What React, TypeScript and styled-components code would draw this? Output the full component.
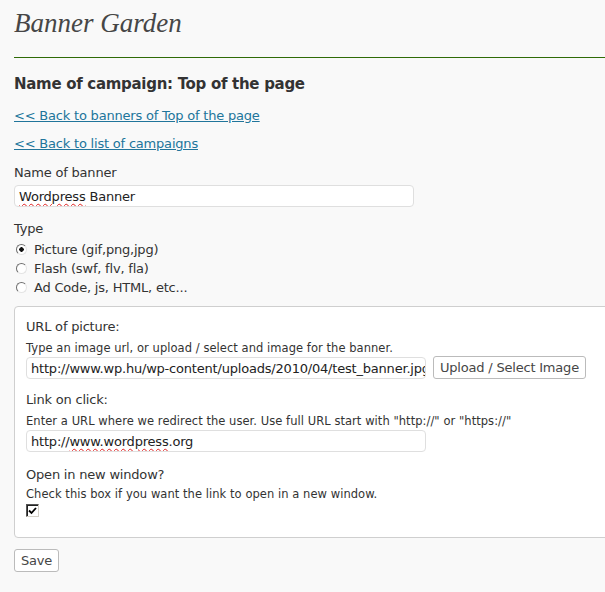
import { createGlobalStyle } from 'styled-components';
import styled from 'styled-components';

const GlobalStyle = createGlobalStyle`
  html, body {
    margin: 0;
    padding: 0;
    background: #f9f9f9;
    overflow: hidden;
  }
  body {
    font-family: "DejaVu Sans", Verdana, sans-serif;
    font-size: 13px;
    letter-spacing: -0.2px;
    color: #333;
  }
`;

const Page = styled.div`
  padding-left: 14px;
`;

const Title = styled.h1`
  margin: 0;
  padding: 7px 0 18px;
  font-family: "Liberation Serif", Georgia, serif;
  font-style: italic;
  font-weight: normal;
  font-size: 27px;
  line-height: 32px;
  letter-spacing: 0;
  color: #464646;
  border-bottom: 1px solid #2f6b07;
`;

const Heading = styled.h2`
  margin: 17px 0 0;
  font-size: 15px;
  line-height: 18px;
  font-weight: bold;
  letter-spacing: -0.3px;
  color: #333;
`;

const BackLink = styled.a<{ $gap: number }>`
  display: block;
  width: max-content;
  margin-top: ${(p) => p.$gap}px;
  line-height: 16px;
  color: #21759b;
  text-decoration: underline;
`;

const Label = styled.div<{ $gap: number }>`
  margin-top: ${(p) => p.$gap}px;
  line-height: 16px;
  color: #333;
`;

const Hint = styled.div<{ $gap: number }>`
  margin-top: ${(p) => p.$gap}px;
  font-size: 11.5px;
  line-height: 14px;
  letter-spacing: 0.05px;
  color: #333;
`;

const Field = styled.div<{ $gap?: number }>`
  box-sizing: border-box;
  width: 400px;
  height: 22px;
  margin-top: ${(p) => p.$gap ?? 0}px;
  padding: 0 4px;
  background: #fff;
  border: 1px solid #dfdfdf;
  border-radius: 4px;
  line-height: 21px;
  white-space: nowrap;
  overflow: hidden;
  color: #222;
`;

const Misspelled = styled.span`
  text-decoration: underline wavy #e02020;
  text-decoration-thickness: 1px;
  text-underline-offset: 2px;
`;

const RadioList = styled.div`
  margin-top: 3px;
  display: flex;
  flex-direction: column;
`;

const RadioRow = styled.label`
  display: flex;
  align-items: center;
  height: 19px;
  gap: 7px;
  padding-left: 2px;
`;

const Radio = styled.input.attrs({ type: 'radio' })`
  appearance: none;
  margin: 0;
  box-sizing: border-box;
  width: 11px;
  height: 11px;
  border-radius: 50%;
  border: 1px solid;
  border-color: #6f6f6f #e4e4e4 #e4e4e4 #6f6f6f;
  background: #fff;
  &:checked {
    background: radial-gradient(circle, #111 0 2px, #fff 2.5px);
  }
`;

const Panel = styled.div`
  box-sizing: border-box;
  width: 640px;
  margin-top: 9px;
  padding: 12px 11px 20px;
  background: #fff;
  border: 1px solid #cfcfcf;
  border-radius: 4px;
`;

const FieldRow = styled.div`
  display: flex;
  align-items: center;
  gap: 7px;
  margin-top: 1px;
`;

const Button = styled.button<{ $gap?: number }>`
  box-sizing: border-box;
  height: 23px;
  margin: ${(p) => p.$gap ?? 0}px 0 0;
  padding: 0 6px;
  font-family: "DejaVu Sans", Verdana, sans-serif;
  font-size: 13px;
  letter-spacing: -0.2px;
  color: #464646;
  background: #fff;
  border: 1px solid #bbb;
  border-radius: 3px;
  line-height: 21px;
`;

const CheckBox = styled.span`
  display: flex;
  align-items: center;
  justify-content: center;
  box-sizing: border-box;
  width: 13px;
  height: 13px;
  margin-top: 3px;
  border: 1px solid;
  border-color: #555 #d4d0c8 #d4d0c8 #555;
  background: #fff;
  box-shadow: inset 1px 1px 0 #222;
`;

export default function App() {
  return (
    <>
      <GlobalStyle />
      <Page>
        <Title>Banner Garden</Title>
        <Heading>Name of campaign: Top of the page</Heading>
        <BackLink $gap={15} href="#">&lt;&lt; Back to banners of Top of the page</BackLink>
        <BackLink $gap={12} href="#">&lt;&lt; Back to list of campaigns</BackLink>

        <Label $gap={13}>Name of banner</Label>
        <Field $gap={4}>
          <Misspelled>Wordpress</Misspelled> Banner
        </Field>

        <Label $gap={14}>Type</Label>
        <RadioList>
          <RadioRow>
            <Radio name="type" defaultChecked />
            Picture (gif,png,jpg)
          </RadioRow>
          <RadioRow>
            <Radio name="type" />
            Flash (swf, flv, fla)
          </RadioRow>
          <RadioRow>
            <Radio name="type" />
            Ad Code, js, HTML, etc...
          </RadioRow>
        </RadioList>

        <Panel>
          <Label $gap={0}>URL of picture:</Label>
          <Hint $gap={6}>Type an image url, or upload / select and image for the banner.</Hint>
          <FieldRow>
            <Field>http://www.wp.hu/wp-content/uploads/2010/04/test_banner.jpg</Field>
            <Button>Upload / Select Image</Button>
          </FieldRow>

          <Label $gap={13}>Link on click:</Label>
          <Hint $gap={6}>
            Enter a URL where we redirect the user. Use full URL start with "http://" or "https://"
          </Hint>
          <Field $gap={2}>
            http://<Misspelled>www.wordpress</Misspelled>.org
          </Field>

          <Label $gap={15}>Open in new window?</Label>
          <Hint $gap={4}>Check this box if you want the link to open in a new window.</Hint>
          <CheckBox>
            <svg width="9" height="8" viewBox="0 0 9 8">
              <path d="M1 3.5 L3.5 6 L8 1" stroke="#000" strokeWidth="1.8" fill="none" />
            </svg>
          </CheckBox>
        </Panel>

        <Button $gap={11}>Save</Button>
      </Page>
    </>
  );
}
